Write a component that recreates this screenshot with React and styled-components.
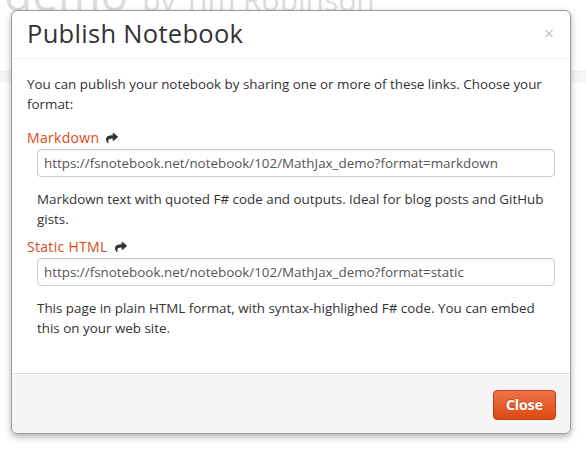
import React from 'react';
import styled, { createGlobalStyle } from 'styled-components';
import { FaShare } from 'react-icons/fa';

const GlobalStyle = createGlobalStyle`
  html, body {
    margin: 0;
    padding: 0;
    background: #ffffff;
    font-family: "Open Sans", "DejaVu Sans", sans-serif;
  }
`;

const Page = styled.div`
  position: relative;
  width: 586px;
  height: 451px;
  overflow: hidden;
  background: #fff;
`;

const BackTitle = styled.div`
  margin-top: -30px;
  padding-left: 4px;
  color: #dcdcdc;
  font-size: 46px;
  line-height: 46px;
  white-space: nowrap;

  small {
    font-size: 30px;
    margin-left: 14px;
  }
`;

const BackBand = styled.div`
  margin-top: 48px;
  height: 10px;
  background: #f6f6f6;
  border-top: 1px solid #eeeeee;
`;

const Modal = styled.div`
  position: absolute;
  left: 11px;
  top: 10px;
  width: 558px;
  border: 1px solid #9a9a9a;
  border-radius: 6px;
  background: #fff;
  box-shadow: 0 3px 7px rgba(0, 0, 0, 0.3);
  color: #333;
  display: flex;
  flex-direction: column;
`;

const Header = styled.div`
  display: flex;
  align-items: center;
  justify-content: space-between;
  height: 47px;
  padding: 0 15px;
  border-bottom: 1px solid #eeeeee;
`;

const Title = styled.h3`
  margin: -3px 0 0;
  font-size: 25.5px;
  font-weight: 400;
  color: #333;
  letter-spacing: 0.3px;
`;

const CloseX = styled.span`
  font-size: 18px;
  color: #c4c4c4;
  margin: -4px 1px 0 0;
`;

const Body = styled.div`
  padding: 15px 15px 0;
  height: 299px;
  font-size: 13.4px;
  line-height: 20px;
`;

const Intro = styled.p`
  margin: 0 0 14px;
`;

const Label = styled.div`
  display: flex;
  align-items: center;
  gap: 7px;
  color: #dd4814;
  font-size: 14px;
  line-height: 20px;
  letter-spacing: 0.3px;

  svg {
    color: #333;
    font-size: 12px;
  }
`;

const Section = styled.div`
  padding-left: 10px;
  margin-bottom: 8px;
`;

const Field = styled.div`
  margin-top: 1px;
  height: 26px;
  width: 504px;
  border: 1px solid #cccccc;
  border-radius: 4px;
  padding: 0 6px;
  display: flex;
  align-items: center;
  color: #555;
  font-size: 13.4px;
  box-shadow: inset 0 1px 1px rgba(0, 0, 0, 0.05);
`;

const Desc = styled.p`
  margin: 12px 0 0;
  width: 512px;
`;

const Footer = styled.div`
  display: flex;
  justify-content: flex-end;
  align-items: center;
  height: 59px;
  padding: 0 14px;
  background: #f5f5f5;
  border-top: 1px solid #dddddd;
  border-radius: 0 0 6px 6px;
  box-shadow: inset 0 1px 0 #fff;
`;

const Button = styled.button`
  font-family: inherit;
  font-size: 14px;
  font-weight: 700;
  color: #fff;
  height: 30px;
  padding: 0 12px;
  border: 1px solid #c13f12;
  border-radius: 4px;
  background: linear-gradient(#ef7346, #dd4814);
  text-shadow: 0 -1px 0 rgba(0, 0, 0, 0.2);
  margin-top: 2px;
`;

const links = [
  {
    label: 'Markdown',
    url: 'https://fsnotebook.net/notebook/102/MathJax_demo?format=markdown',
    desc: 'Markdown text with quoted F# code and outputs. Ideal for blog posts and GitHub gists.',
  },
  {
    label: 'Static HTML',
    url: 'https://fsnotebook.net/notebook/102/MathJax_demo?format=static',
    desc: 'This page in plain HTML format, with syntax-highlighed F# code. You can embed this on your web site.',
  },
];

export default function App() {
  return (
    <Page>
      <GlobalStyle />
      <BackTitle>
        demo<small>by Tim Robinson</small>
      </BackTitle>
      <BackBand />
      <Modal>
        <Header>
          <Title>Publish Notebook</Title>
          <CloseX>×</CloseX>
        </Header>
        <Body>
          <Intro>
            You can publish your notebook by sharing one or more of these links. Choose your format:
          </Intro>
          {links.map((l) => (
            <React.Fragment key={l.label}>
              <Label>
                {l.label}
                <FaShare />
              </Label>
              <Section>
                <Field>{l.url}</Field>
                <Desc>{l.desc}</Desc>
              </Section>
            </React.Fragment>
          ))}
        </Body>
        <Footer>
          <Button>Close</Button>
        </Footer>
      </Modal>
    </Page>
  );
}
